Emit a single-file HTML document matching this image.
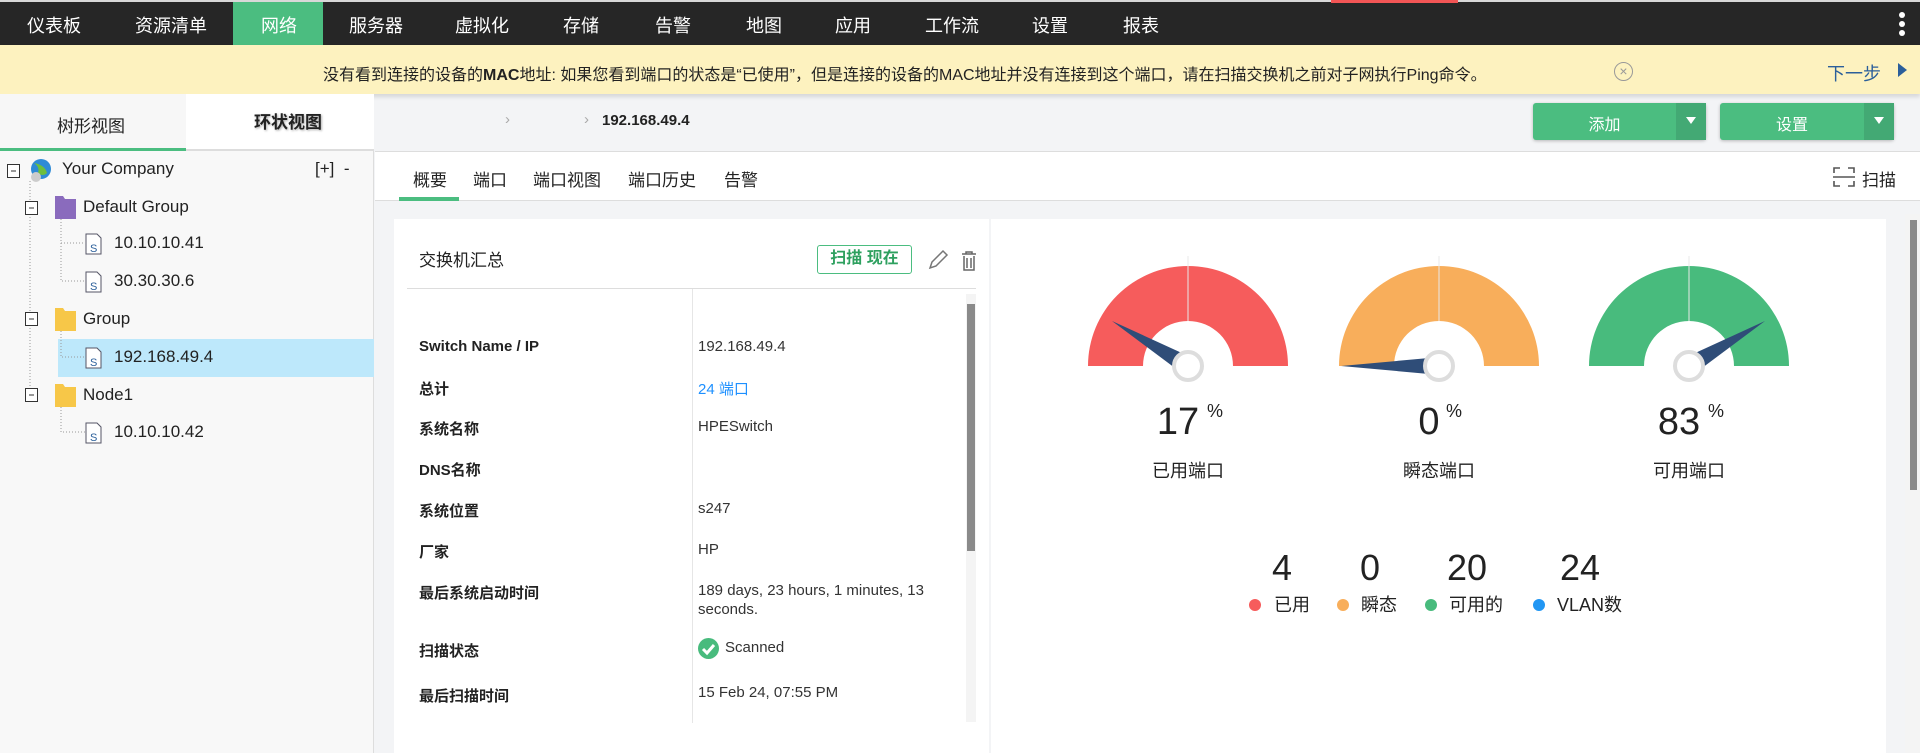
<!DOCTYPE html>
<html><head><meta charset="utf-8"><style>
*{margin:0;padding:0;box-sizing:border-box}
body{width:1920px;height:753px;overflow:hidden;background:#f3f4f6;font-family:"Liberation Sans","Noto Sans CJK SC",sans-serif;color:#222;position:relative}
.a{position:absolute;white-space:nowrap}
.nav{left:0;top:0;width:1920px;height:45px;background:#262626}
.nav span{position:absolute;top:12px;color:#fff;font-size:18px}
.lbl{font-size:15px;font-weight:bold;color:#222}
.val{font-size:15px;color:#333}
.tr{font-size:17px;color:#222}
</style></head><body>
<div class="a nav">
<div class="a" style="left:0;top:0;width:1920px;height:2px;background:#d8d8d8"></div>
<div class="a" style="left:1331px;top:0;width:127px;height:3px;background:#f25555"></div>
<div class="a" style="left:233px;top:2px;width:90px;height:43px;background:#4bbd80"></div>
<span style="left:27px">仪表板</span><span style="left:135px">资源清单</span><span style="left:261px">网络</span><span style="left:349px">服务器</span><span style="left:455px">虚拟化</span><span style="left:563px">存储</span><span style="left:655px">告警</span><span style="left:746px">地图</span><span style="left:835px">应用</span><span style="left:925px">工作流</span><span style="left:1032px">设置</span><span style="left:1123px">报表</span>
<div class="a" style="left:1899px;top:12px;width:6px;height:6px;border-radius:3px;background:#fff;box-shadow:0 9px 0 #fff,0 18px 0 #fff"></div>
</div>
<div class="a" style="left:0;top:45px;width:1920px;height:49px;background:#fdf2bf;box-shadow:0 3px 4px rgba(0,0,0,.12)"></div>
<div class="a" style="left:323px;top:61px;font-size:16px;color:#222">没有看到连接的设备的<b>MAC</b>地址: 如果您看到端口的状态是“已使用”，但是连接的设备的MAC地址并没有连接到这个端口，请在扫描交换机之前对子网执行Ping命令。</div>
<div class="a" style="left:1614px;top:62px;width:19px;height:19px;border:1.5px solid #999;border-radius:50%;color:#999;font-size:14px;line-height:16px;text-align:center">×</div>
<div class="a" style="left:1827px;top:60px;font-size:18px;color:#2b5f9a">下一步</div>
<div class="a" style="left:1898px;top:63px;border-left:9px solid #2b5f9a;border-top:7px solid transparent;border-bottom:7px solid transparent"></div>

<!-- left panel -->
<div class="a" style="left:0;top:94px;width:374px;height:659px;background:#f8f8f8;border-right:1px solid #ddd"></div>
<div class="a" style="left:0;top:94px;width:186px;height:56px;background:#f7f7f7"></div>
<div class="a" style="left:186px;top:94px;width:188px;height:56px;background:#fff"></div>
<div class="a" style="left:0;top:148px;width:186px;height:3px;background:#4bbd80"></div>
<div class="a" style="left:186px;top:149px;width:188px;height:2px;background:#ddd"></div>
<div class="a" style="left:57px;top:112px;font-size:17px">树形视图</div>
<div class="a" style="left:254px;top:108px;font-size:17px;font-weight:bold;text-shadow:1px 1px 2px #aaa">环状视图</div>
<div class="a" style="left:58px;top:339px;width:316px;height:38px;background:#bde8fb"></div>
<svg class="a" style="left:0;top:155px" width="374" height="300">
<g stroke="#999" stroke-dasharray="1,2" fill="none">
<path d="M30 26V240M25 52H38M25 164H38M25 240H38"/>
<path d="M61 64V126H85M61 88H85M61 176V202H85M61 252V277H85"/>
</g>
<g fill="#fff" stroke="#333" stroke-width="1"><rect x="7.5" y="9.5" width="12" height="13"/><rect x="25.5" y="46.5" width="12" height="13"/><rect x="25.5" y="157.5" width="12" height="13"/><rect x="25.5" y="233.5" width="12" height="13"/></g>
<g stroke="#333"><path d="M11 16h5M29 53h5M29 164h5M29 240h5"/></g>
<circle cx="41" cy="14" r="10" fill="#2e8bd6"/><path d="M34 8q6 4 4 10q5 4 9 0q-2-8-13-10z" fill="#6cbf3e"/><circle cx="36" cy="22" r="5" fill="#ccc"/>
<path d="M55 41h8l2 3h11v20h-21z" fill="#8a6bbd"/>
<path d="M55 153h8l2 3h11v20h-21z" fill="#f7c748"/>
<path d="M55 229h8l2 3h11v20h-21z" fill="#f7c748"/>
<g fill="#fff" stroke="#556"><path d="M86 79h11l4 4v16h-15z"/><path d="M86 117h11l4 4v16h-15z"/><path d="M86 193h11l4 4v16h-15z"/><path d="M86 268h11l4 4v16h-15z"/></g>
<g font-size="11" fill="#2b5f9a" font-family="Liberation Sans"><text x="90" y="97">S</text><text x="90" y="135">S</text><text x="90" y="211">S</text><text x="90" y="286">S</text></g>
</svg>
<div class="a tr" style="left:62px;top:159px">Your Company</div>
<div class="a tr" style="left:315px;top:159px">[+] &nbsp;-</div>
<div class="a tr" style="left:83px;top:197px">Default Group</div>
<div class="a tr" style="left:114px;top:233px">10.10.10.41</div>
<div class="a tr" style="left:114px;top:271px">30.30.30.6</div>
<div class="a tr" style="left:83px;top:309px">Group</div>
<div class="a tr" style="left:114px;top:347px">192.168.49.4</div>
<div class="a tr" style="left:83px;top:385px">Node1</div>
<div class="a tr" style="left:114px;top:422px">10.10.10.42</div>

<!-- breadcrumb & buttons -->
<div class="a" style="left:505px;top:111px;color:#aaa;font-size:15px">›</div>
<div class="a" style="left:584px;top:111px;color:#aaa;font-size:15px">›</div>
<div class="a" style="left:602px;top:112px;font-size:15px;font-weight:bold">192.168.49.4</div>
<div class="a" style="left:1533px;top:103px;width:173px;height:37px;background:#4bbd80;border-radius:3px;box-shadow:0 1px 3px rgba(0,0,0,.25)"><div class="a" style="left:143px;top:0;width:30px;height:37px;background:#43a974"></div><div class="a" style="left:0;width:143px;top:8px;text-align:center;color:#fff;font-size:16px">添加</div><div class="a" style="left:153px;top:14px;border-top:7px solid #fff;border-left:5px solid transparent;border-right:5px solid transparent"></div></div>
<div class="a" style="left:1720px;top:103px;width:174px;height:37px;background:#4bbd80;border-radius:3px;box-shadow:0 1px 3px rgba(0,0,0,.25)"><div class="a" style="left:144px;top:0;width:30px;height:37px;background:#43a974"></div><div class="a" style="left:0;width:144px;top:8px;text-align:center;color:#fff;font-size:16px">设置</div><div class="a" style="left:154px;top:14px;border-top:7px solid #fff;border-left:5px solid transparent;border-right:5px solid transparent"></div></div>

<!-- tabs -->
<div class="a" style="left:375px;top:151px;width:1545px;height:50px;background:#fff;border-top:1px solid #ddd;border-bottom:1px solid #ddd"></div>
<div class="a" style="left:413px;top:166px;font-size:17px">概要</div>
<div class="a" style="left:473px;top:166px;font-size:17px">端口</div>
<div class="a" style="left:533px;top:166px;font-size:17px">端口视图</div>
<div class="a" style="left:628px;top:166px;font-size:17px">端口历史</div>
<div class="a" style="left:724px;top:166px;font-size:17px">告警</div>
<div class="a" style="left:399px;top:197px;width:60px;height:4px;background:#4bbd80"></div>
<svg class="a" style="left:1832px;top:166px" width="24" height="22"><path d="M2 7V2h6M16 2h6v5M2 15v5h6M16 20h6v-5M1 11h22" fill="none" stroke="#555" stroke-width="1.6"/></svg>
<div class="a" style="left:1862px;top:166px;font-size:17px">扫描</div>

<!-- left card -->
<div class="a" style="left:394px;top:219px;width:595px;height:534px;background:#fff"></div>
<div class="a" style="left:419px;top:246px;font-size:17px">交换机汇总</div>
<div class="a" style="left:817px;top:245px;width:95px;height:29px;border:1.5px solid #4bbd80;border-radius:3px;color:#2ea05f;font-weight:bold;font-size:16px;text-align:center;line-height:26px">扫描 现在</div>
<svg class="a" style="left:926px;top:248px" width="60" height="24"><path d="M4 20l2-6 11-11 4 4-11 11z" fill="none" stroke="#777" stroke-width="1.5"/><path d="M36 6h14M40 6V4h6v2M38 8v14h10V8M41 10v10M45 10v10" fill="none" stroke="#666" stroke-width="1.5"/></svg>
<div class="a" style="left:407px;top:288px;width:569px;height:1px;background:#ddd"></div>
<div class="a" style="left:692px;top:289px;width:1px;height:434px;background:#e6e6e6"></div>
<div class="a" style="left:966px;top:294px;width:10px;height:428px;background:#f4f4f4"></div>
<div class="a" style="left:967px;top:304px;width:8px;height:247px;background:#8a8a8a"></div>
<div class="a lbl" style="left:419px;top:338px">Switch Name / IP</div><div class="a val" style="left:698px;top:338px">192.168.49.4</div>
<div class="a lbl" style="left:419px;top:378px">总计</div><div class="a val" style="left:698px;top:378px;color:#1e90ff">24 端口</div>
<div class="a lbl" style="left:419px;top:418px">系统名称</div><div class="a val" style="left:698px;top:418px">HPESwitch</div>
<div class="a lbl" style="left:419px;top:459px">DNS名称</div>
<div class="a lbl" style="left:419px;top:500px">系统位置</div><div class="a val" style="left:698px;top:500px">s247</div>
<div class="a lbl" style="left:419px;top:541px">厂家</div><div class="a val" style="left:698px;top:541px">HP</div>
<div class="a lbl" style="left:419px;top:582px">最后系统启动时间</div><div class="a val" style="left:698px;top:581px;line-height:19px">189 days, 23 hours, 1 minutes, 13<br>seconds.</div>
<div class="a lbl" style="left:419px;top:640px">扫描状态</div>
<div class="a" style="left:698px;top:638px;width:21px;height:21px;border-radius:50%;background:#48bb7d"></div>
<svg class="a" style="left:698px;top:638px" width="21" height="21"><path d="M5 11l4 4 7-8" fill="none" stroke="#fff" stroke-width="3"/></svg>
<div class="a val" style="left:725px;top:639px">Scanned</div>
<div class="a lbl" style="left:419px;top:685px">最后扫描时间</div><div class="a val" style="left:698px;top:684px">15 Feb 24, 07:55 PM</div>

<!-- right card -->
<div class="a" style="left:991px;top:219px;width:895px;height:534px;background:#fff"></div>
<div class="a" style="left:1905px;top:214px;width:15px;height:539px;background:#f4f4f4"></div>
<div class="a" style="left:1910px;top:220px;width:7px;height:270px;background:#8a8a8a"></div>
<svg class="a" style="left:0;top:0" width="1920" height="753">
<g>
<path d="M1088 366A100 100 0 0 1 1288 366H1233A45 45 0 0 0 1143 366Z" fill="#f65c5c"/>
<path d="M1339 366A100 100 0 0 1 1539 366H1484A45 45 0 0 0 1394 366Z" fill="#f8ae5b"/>
<path d="M1589 366A100 100 0 0 1 1789 366H1734A45 45 0 0 0 1644 366Z" fill="#48bb7d"/>
<path d="M1188 256V321M1439 256V321M1689 256V321" stroke="#e8e8e8" stroke-width="1"/>
<g fill="#2f4d78"><polygon points="1112,321 1184,354 1175,368"/><polygon points="1341,366 1429,358 1429,374"/><polygon points="1765,321 1702,368 1693,354"/></g>
<g fill="#fff" stroke="#ddd" stroke-width="4"><circle cx="1188" cy="366" r="14"/><circle cx="1439" cy="366" r="14"/><circle cx="1689" cy="366" r="14"/></g>
</g>
<g font-family="Liberation Sans,sans-serif" fill="#222">
<text x="1178" y="434" font-size="38" text-anchor="middle">17</text><text x="1207" y="417" font-size="18">%</text>
<text x="1429" y="434" font-size="38" text-anchor="middle">0</text><text x="1446" y="417" font-size="18">%</text>
<text x="1679" y="434" font-size="38" text-anchor="middle">83</text><text x="1708" y="417" font-size="18">%</text>
<g font-size="18" font-family="Liberation Sans,Noto Sans CJK SC,sans-serif" text-anchor="middle"><text x="1188" y="477">已用端口</text><text x="1439" y="477">瞬态端口</text><text x="1689" y="477">可用端口</text></g>
<g font-size="36" text-anchor="middle"><text x="1282" y="580">4</text><text x="1370" y="580">0</text><text x="1467" y="580">20</text><text x="1580" y="580">24</text></g>
<circle cx="1255" cy="605" r="6" fill="#f65c5c"/><circle cx="1343" cy="605" r="6" fill="#f8ae5b"/><circle cx="1431" cy="605" r="6" fill="#48bb7d"/><circle cx="1539" cy="605" r="6" fill="#2196f3"/>
<g font-size="18" font-family="Liberation Sans,Noto Sans CJK SC,sans-serif"><text x="1274" y="611">已用</text><text x="1361" y="611">瞬态</text><text x="1449" y="611">可用的</text><text x="1557" y="611">VLAN数</text></g>
</g>
</svg>
</body></html>
